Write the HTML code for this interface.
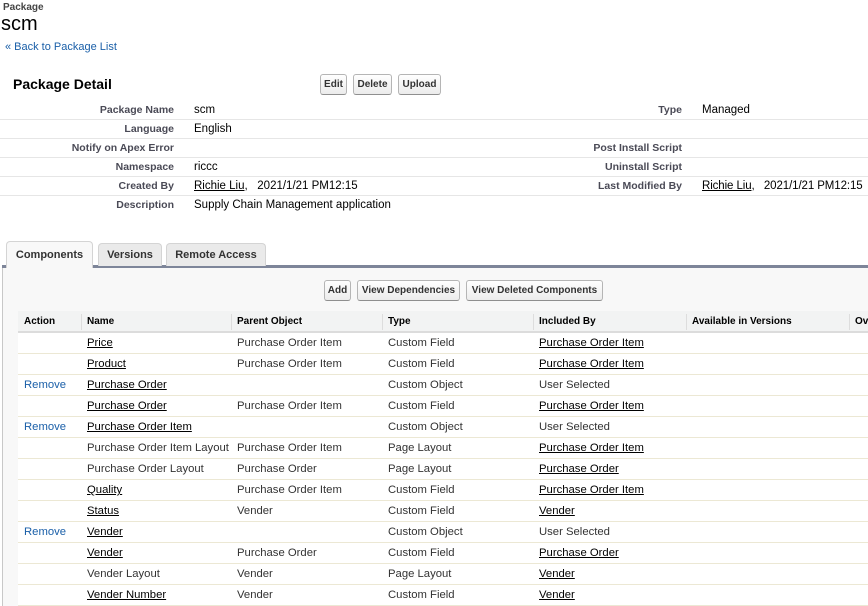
<!DOCTYPE html>
<html><head><style>
*{margin:0;padding:0;box-sizing:border-box}
body{width:868px;height:606px;overflow:hidden;background:#fff;font-family:"Liberation Sans",Arial,sans-serif;color:#222;position:relative;font-size:12px}
.a{position:absolute;white-space:nowrap}
.lbl{font-weight:bold;font-size:10.5px;color:#4a4a56;text-align:right}
.val{font-size:11.5px;color:#000}
.line{position:absolute;left:0;width:868px;height:1px;background:#e6e6e6}
.btn{position:absolute;height:21px;border:1px solid #b5b5b5;border-bottom-color:#8f8f8f;border-radius:3px;background:linear-gradient(#fff,#ececec);font-weight:bold;font-size:10px;color:#333;text-align:center;line-height:19px}
u{color:#000}
.tab{position:absolute;top:243px;height:23px;border:1px solid #d4d4d4;border-bottom:none;border-radius:4px 4px 0 0;background:#eaeaea;font-weight:bold;font-size:11px;color:#333;text-align:center;line-height:22px}
.row{position:absolute;left:18px;width:850px;height:21px;border-bottom:1px solid #ece8d4;background:#fff;font-size:11.3px;color:#333}
.row span{position:absolute;top:4px;white-space:nowrap}
.rm{color:#1a5fa8}
</style></head><body>
<div class="a" style="left:3px;top:2px;font-size:10px;font-weight:bold;color:#444">Package</div>
<div class="a" style="left:1px;top:13px;font-size:20px;color:#000">scm</div>
<div class="a" style="left:5px;top:41px;font-size:11px;color:#1a5fa8">« Back to Package List</div>

<div class="a" style="left:13px;top:76px;font-size:14px;font-weight:bold;color:#000">Package Detail</div>
<div class="btn" style="left:320px;top:74px;width:27px">Edit</div>
<div class="btn" style="left:353px;top:74px;width:39px">Delete</div>
<div class="btn" style="left:398px;top:74px;width:43px">Upload</div>

<div class="line" style="top:119px"></div>
<div class="line" style="top:138px"></div>
<div class="line" style="top:157px"></div>
<div class="line" style="top:176px"></div>
<div class="line" style="top:195px"></div>

<div class="a lbl" style="right:694px;top:104px">Package Name</div>
<div class="a lbl" style="right:694px;top:123px">Language</div>
<div class="a lbl" style="right:694px;top:142px">Notify on Apex Error</div>
<div class="a lbl" style="right:694px;top:161px">Namespace</div>
<div class="a lbl" style="right:694px;top:180px">Created By</div>
<div class="a lbl" style="right:694px;top:199px">Description</div>
<div class="a val" style="left:194px;top:104px">scm</div>
<div class="a val" style="left:194px;top:123px">English</div>
<div class="a val" style="left:194px;top:161px">riccc</div>
<div class="a val" style="left:194px;top:180px"><u>Richie Liu</u>,&nbsp;&nbsp; 2021/1/21 PM12:15</div>
<div class="a val" style="left:194px;top:199px">Supply Chain Management application</div>

<div class="a lbl" style="right:186px;top:104px">Type</div>
<div class="a lbl" style="right:186px;top:142px">Post Install Script</div>
<div class="a lbl" style="right:186px;top:161px">Uninstall Script</div>
<div class="a lbl" style="right:186px;top:180px">Last Modified By</div>
<div class="a val" style="left:702px;top:104px">Managed</div>
<div class="a val" style="left:702px;top:180px;letter-spacing:-0.1px"><u>Richie Liu</u>,&nbsp;&nbsp;&nbsp;2021/1/21 PM12:15</div>

<div style="position:absolute;left:2px;top:266px;width:866px;height:340px;background:#f8f8f8;border-left:1px solid #c8c8c8"></div>
<div style="position:absolute;left:92px;top:265px;width:776px;height:3px;background:#7d8599"></div>
<div style="position:absolute;left:2px;top:265px;width:5px;height:3px;background:#7d8599"></div>
<div class="tab" style="left:6px;top:241px;width:87px;height:27px;background:#f8f8f8;line-height:26px">Components</div>
<div class="tab" style="left:98px;width:64px">Versions</div>
<div class="tab" style="left:166px;width:100px">Remote Access</div>

<div class="btn" style="left:324px;top:280px;width:27px">Add</div>
<div class="btn" style="left:357px;top:280px;width:103px">View Dependencies</div>
<div class="btn" style="left:466px;top:280px;width:137px">View Deleted Components</div>

<div style="position:absolute;left:18px;top:311px;width:850px;height:22px;background:#f2f3f3;border-bottom:2px solid #dcdcdc;font-weight:bold;font-size:10px;color:#000">
<span class="a" style="left:6px;top:5px">Action</span>
<span class="a" style="left:69px;top:5px">Name</span>
<span class="a" style="left:219px;top:5px">Parent Object</span>
<span class="a" style="left:370px;top:5px">Type</span>
<span class="a" style="left:521px;top:5px">Included By</span>
<span class="a" style="left:674px;top:5px">Available in Versions</span>
<span class="a" style="left:837px;top:5px">Ov</span>
<div style="position:absolute;left:63px;top:3px;width:1px;height:16px;background:#ddd"></div>
<div style="position:absolute;left:213px;top:3px;width:1px;height:16px;background:#ddd"></div>
<div style="position:absolute;left:364px;top:3px;width:1px;height:16px;background:#ddd"></div>
<div style="position:absolute;left:515px;top:3px;width:1px;height:16px;background:#ddd"></div>
<div style="position:absolute;left:668px;top:3px;width:1px;height:16px;background:#ddd"></div>
<div style="position:absolute;left:831px;top:3px;width:1px;height:16px;background:#ddd"></div>
</div>

<div class="row" style="top:333px"><span style="left:69px"><u>Price</u></span><span style="left:219px">Purchase Order Item</span><span style="left:370px">Custom Field</span><span style="left:521px"><u>Purchase Order Item</u></span></div>
<div class="row" style="top:354px"><span style="left:69px"><u>Product</u></span><span style="left:219px">Purchase Order Item</span><span style="left:370px">Custom Field</span><span style="left:521px"><u>Purchase Order Item</u></span></div>
<div class="row" style="top:375px"><span class="rm" style="left:6px">Remove</span><span style="left:69px"><u>Purchase Order</u></span><span style="left:370px">Custom Object</span><span style="left:521px">User Selected</span></div>
<div class="row" style="top:396px"><span style="left:69px"><u>Purchase Order</u></span><span style="left:219px">Purchase Order Item</span><span style="left:370px">Custom Field</span><span style="left:521px"><u>Purchase Order Item</u></span></div>
<div class="row" style="top:417px"><span class="rm" style="left:6px">Remove</span><span style="left:69px"><u>Purchase Order Item</u></span><span style="left:370px">Custom Object</span><span style="left:521px">User Selected</span></div>
<div class="row" style="top:438px"><span style="left:69px">Purchase Order Item Layout</span><span style="left:219px">Purchase Order Item</span><span style="left:370px">Page Layout</span><span style="left:521px"><u>Purchase Order Item</u></span></div>
<div class="row" style="top:459px"><span style="left:69px">Purchase Order Layout</span><span style="left:219px">Purchase Order</span><span style="left:370px">Page Layout</span><span style="left:521px"><u>Purchase Order</u></span></div>
<div class="row" style="top:480px"><span style="left:69px"><u>Quality</u></span><span style="left:219px">Purchase Order Item</span><span style="left:370px">Custom Field</span><span style="left:521px"><u>Purchase Order Item</u></span></div>
<div class="row" style="top:501px"><span style="left:69px"><u>Status</u></span><span style="left:219px">Vender</span><span style="left:370px">Custom Field</span><span style="left:521px"><u>Vender</u></span></div>
<div class="row" style="top:522px"><span class="rm" style="left:6px">Remove</span><span style="left:69px"><u>Vender</u></span><span style="left:370px">Custom Object</span><span style="left:521px">User Selected</span></div>
<div class="row" style="top:543px"><span style="left:69px"><u>Vender</u></span><span style="left:219px">Purchase Order</span><span style="left:370px">Custom Field</span><span style="left:521px"><u>Purchase Order</u></span></div>
<div class="row" style="top:564px"><span style="left:69px">Vender Layout</span><span style="left:219px">Vender</span><span style="left:370px">Page Layout</span><span style="left:521px"><u>Vender</u></span></div>
<div class="row" style="top:585px"><span style="left:69px"><u>Vender Number</u></span><span style="left:219px">Vender</span><span style="left:370px">Custom Field</span><span style="left:521px"><u>Vender</u></span></div>
</body></html>
